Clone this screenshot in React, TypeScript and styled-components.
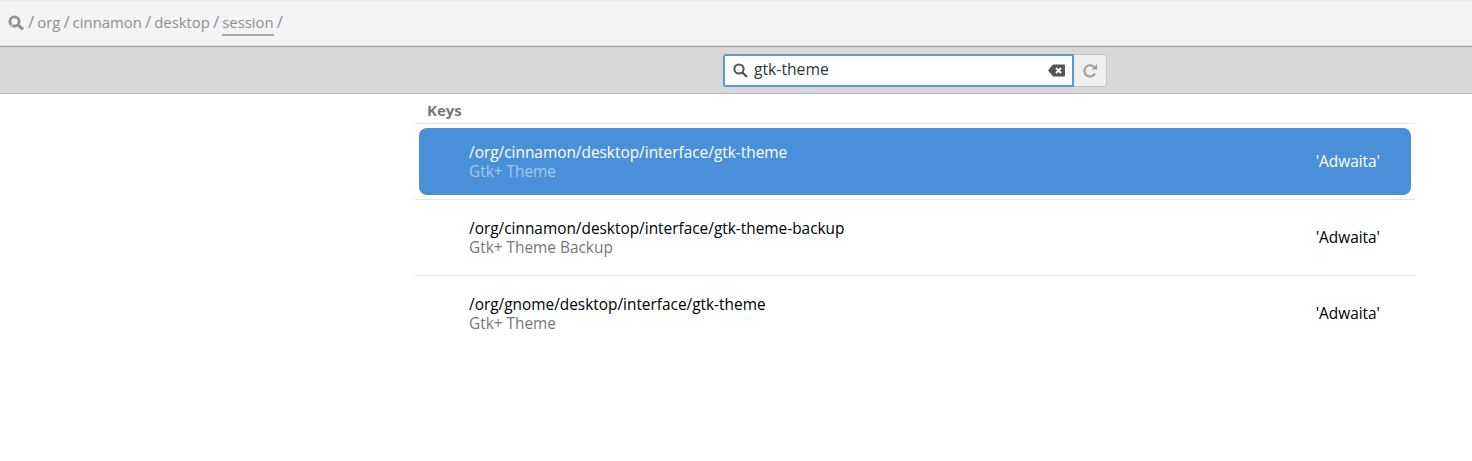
import React from "react";
import styled, { createGlobalStyle } from "styled-components";

const Global = createGlobalStyle`
  html, body { margin: 0; padding: 0; background: #fff; }
  body { font-family: "Open Sans", "Noto Sans", sans-serif; }
`;

const Page = styled.div`
  width: 1472px;
  height: 461px;
  overflow: hidden;
  background: #fff;
  display: flex;
  flex-direction: column;
`;

const PathBar = styled.div`
  height: 46px;
  box-sizing: border-box;
  background: #f4f4f4;
  border-top: 1px solid #ececec;
  border-bottom: 1px solid #e2e2e2;
  display: flex;
  align-items: baseline;
  padding: 10px 0 0 6px;
  font-size: 14.9px;
  line-height: 21px;
  color: #8f8f8f;
`;

const RootIcon = styled.svg`
  width: 18px;
  height: 18px;
  margin: 3px 3px 0 1px;
  flex: none;
  align-self: flex-start;
`;

const Sep = styled.span`
  font-size: 17px;
  color: #7f96ad;
  margin-right: 3px;
`;

const Crumb = styled.span<{ $active?: boolean }>`
  margin-right: 3px;
  height: 22px;
  border-bottom: ${(p) => (p.$active ? "2px solid #a9a9a9" : "none")};
`;

const Toolbar = styled.div`
  height: 48px;
  box-sizing: border-box;
  background: #d8d8d6;
  border-top: 1px solid #9a9a96;
  border-bottom: 1px solid #b6b6b3;
  display: flex;
  align-items: flex-start;
  padding: 7px 0 0 723px;
`;

const SearchBox = styled.div`
  width: 351px;
  height: 33px;
  box-sizing: border-box;
  background: #fff;
  border: 2px solid #5b9bd5;
  border-radius: 3px 0 0 3px;
  display: flex;
  align-items: center;
  padding: 0 7px 0 7px;
  font-size: 15.7px;
  color: #2e3436;
`;

const SearchText = styled.span`
  flex: 1;
  margin: -4px 0 0 5px;
`;

const Refresh = styled.div`
  width: 33px;
  height: 33px;
  box-sizing: border-box;
  background: #efefef;
  border: 1px solid #c2c2c0;
  border-left: none;
  border-radius: 0 3px 3px 0;
  display: flex;
  align-items: center;
  justify-content: center;
`;

const Content = styled.div`
  padding-left: 415px;
  width: 1000px;
`;

const ListHeader = styled.div`
  height: 30px;
  box-sizing: border-box;
  border-bottom: 1px solid #e4e4e4;
  padding: 6px 0 0 12px;
  font-size: 15px;
  line-height: 20px;
  font-weight: 700;
  color: #777;
`;

const RowWrap = styled.div`
  height: 76px;
  box-sizing: border-box;
  padding: 4px;
  border-bottom: 1px solid #e4e4e4;
  &:last-child { border-bottom: none; }
`;

const Row = styled.div<{ $selected?: boolean }>`
  height: 67px;
  box-sizing: border-box;
  border-radius: 8px;
  background: ${(p) => (p.$selected ? "#4a90d9" : "transparent")};
  color: ${(p) => (p.$selected ? "#fff" : "#000")};
  display: flex;
  align-items: center;
  padding: 0 31px 0 50px;
`;

const Texts = styled.div`
  flex: 1;
  display: flex;
  flex-direction: column;
`;

const KeyPath = styled.div`
  font-size: 15.4px;
  line-height: 19px;
`;

const Summary = styled.div<{ $selected?: boolean }>`
  font-size: 15.4px;
  line-height: 19px;
  color: ${(p) => (p.$selected ? "#a5c8ec" : "#777")};
`;

const Value = styled.div`
  font-size: 15.4px;
`;

const rows = [
  { path: "/org/cinnamon/desktop/interface/gtk-theme", summary: "Gtk+ Theme", selected: true },
  { path: "/org/cinnamon/desktop/interface/gtk-theme-backup", summary: "Gtk+ Theme Backup" },
  { path: "/org/gnome/desktop/interface/gtk-theme", summary: "Gtk+ Theme" },
];

const crumbs = ["org", "cinnamon", "desktop", "session"];

export default function App() {
  return (
    <Page>
      <Global />
      <PathBar>
        <RootIcon viewBox="0 0 18 18">
          <circle cx="7.5" cy="7.5" r="4.6" fill="none" stroke="#8e8e8e" strokeWidth="2.8" />
          <path d="M10.5 10.5l5.5 5" stroke="#8e8e8e" strokeWidth="3" />
          <path d="M3 13l3-3" stroke="#c9c9c9" strokeWidth="2" />
        </RootIcon>
        <Sep>/</Sep>
        {crumbs.map((c) => (
          <React.Fragment key={c}>
            <Crumb $active={c === "session"}>{c}</Crumb>
            <Sep>/</Sep>
          </React.Fragment>
        ))}
      </PathBar>
      <Toolbar>
        <SearchBox>
          <svg width="17" height="17" viewBox="0 0 17 17">
            <circle cx="7" cy="7" r="4.6" fill="none" stroke="#555" strokeWidth="2" />
            <path d="M10.5 10.5L15 15" stroke="#555" strokeWidth="2.4" />
          </svg>
          <SearchText>gtk-theme</SearchText>
          <svg width="17" height="13" viewBox="0 0 17 13">
            <path d="M5 0.5h11a1 1 0 0 1 1 1v10a1 1 0 0 1-1 1H5L0 6.5z" fill="#555" />
            <path d="M8 4l5 5M13 4l-5 5" stroke="#fff" strokeWidth="1.8" />
          </svg>
        </SearchBox>
        <Refresh>
          <svg width="16" height="16" viewBox="0 0 16 16">
            <path d="M13 10.5A5.6 5.6 0 1 1 12 4" fill="none" stroke="#9a9a9a" strokeWidth="2" />
            <path d="M9.5 6.5H15V1z" fill="#9a9a9a" />
          </svg>
        </Refresh>
      </Toolbar>
      <Content>
        <ListHeader>Keys</ListHeader>
        {rows.map((r) => (
          <RowWrap key={r.path}>
            <Row $selected={r.selected}>
              <Texts>
                <KeyPath>{r.path}</KeyPath>
                <Summary $selected={r.selected}>{r.summary}</Summary>
              </Texts>
              <Value>'Adwaita'</Value>
            </Row>
          </RowWrap>
        ))}
      </Content>
    </Page>
  );
}
